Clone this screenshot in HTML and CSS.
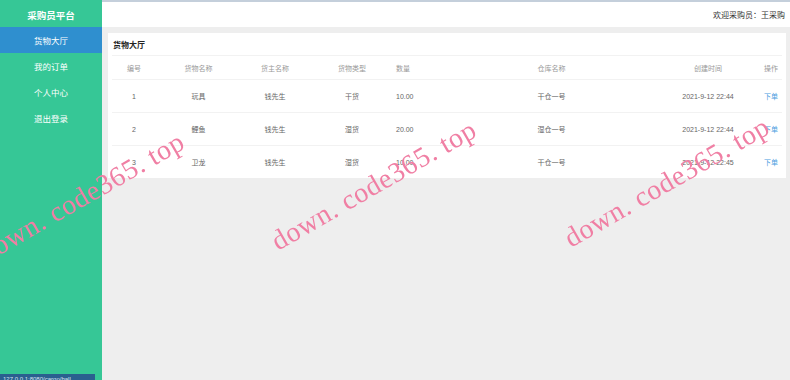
FILE: index.html
```html
<!DOCTYPE html>
<html lang="zh-CN">
<head>
    <meta charset="UTF-8">
    <meta name="viewport" content="width=device-width, initial-scale=1.0">
    <title>采购员平台</title>
    <link rel="stylesheet" href="styles.css">
</head>
<body>
    <div class="layout">
        <aside class="sidebar">
            <div class="brand">采购员平台</div>
            <ul class="menu">
                <li class="active">货物大厅</li>
                <li>我的订单</li>
                <li>个人中心</li>
                <li>退出登录</li>
            </ul>
        </aside>

        <main class="main">
            <header class="topbar">欢迎采购员：王采购</header>

            <section class="card">
                <div class="card-title">货物大厅</div>
                <table class="goods">
                    <colgroup>
                        <col style="width: 44px">
                        <col style="width: 85px">
                        <col style="width: 68px">
                        <col style="width: 86px">
                        <col style="width: 52px">
                        <col style="width: 209px">
                        <col style="width: 104px">
                        <col style="width: 22px">
                    </colgroup>
                    <thead>
                        <tr>
                            <th>编号</th>
                            <th>货物名称</th>
                            <th>货主名称</th>
                            <th>货物类型</th>
                            <th class="left">数量</th>
                            <th>仓库名称</th>
                            <th>创建时间</th>
                            <th>操作</th>
                        </tr>
                    </thead>
                    <tbody>
                        <tr>
                            <td>1</td>
                            <td>玩具</td>
                            <td>钱先生</td>
                            <td>干货</td>
                            <td class="left">10.00</td>
                            <td>干仓一号</td>
                            <td>2021-9-12 22:44</td>
                            <td><a class="action">下单</a></td>
                        </tr>
                        <tr>
                            <td>2</td>
                            <td>鲤鱼</td>
                            <td>钱先生</td>
                            <td>湿货</td>
                            <td class="left">20.00</td>
                            <td>湿仓一号</td>
                            <td>2021-9-12 22:44</td>
                            <td><a class="action">下单</a></td>
                        </tr>
                        <tr>
                            <td>3</td>
                            <td>卫龙</td>
                            <td>钱先生</td>
                            <td>湿货</td>
                            <td class="left">10.00</td>
                            <td>干仓一号</td>
                            <td>2021-9-12 22:45</td>
                            <td><a class="action">下单</a></td>
                        </tr>
                    </tbody>
                </table>
            </section>
        </main>
    </div>

    <!-- watermark overlay -->
    <div class="watermarks">
        <span class="mark mark-1">down. code365. top</span>
        <span class="mark mark-2">down. code365. top</span>
        <span class="mark mark-3">down. code365. top</span>
    </div>

    <div class="status">127.0.0.1:8080/cargo/hall</div>
</body>
</html>
```

FILE: styles.css
```css
:root {
    --green: #36c796;
    --blue: #2f8fcf;
    --page-bg: #eeeeee;
    --line: #f2f2f2;
    --text: #666666;
    --muted: #999999;
    --link: #4a9de0;
}

body {
    margin: 0;
    font-family: "Liberation Sans", "Noto Sans CJK SC", sans-serif;
    color: var(--text);
    overflow: hidden;
}

.layout {
    display: flex;
    height: 100vh;
}

/* Sidebar */
.sidebar {
    width: 102px;
    flex-shrink: 0;
    background-color: var(--green);
    color: #ffffff;
}

.brand {
    height: 24px;
    padding-top: 3px;
    display: flex;
    align-items: center;
    justify-content: center;
    font-size: 9.5px;
    font-weight: bold;
}

.menu {
    list-style: none;
    margin: 0;
    padding: 0;
}

.menu li {
    height: 26px;
    display: flex;
    align-items: center;
    justify-content: center;
    font-size: 8.5px;
}

.menu li.active {
    background-color: var(--blue);
}

/* Main area */
.main {
    flex: 1;
    background-color: var(--page-bg);
    border-top: 2px solid #c4cfdb;
}

.topbar {
    height: 25px;
    background-color: #ffffff;
    display: flex;
    align-items: center;
    justify-content: flex-end;
    padding-right: 5px;
    font-size: 8px;
    color: #333333;
}

.card {
    margin: 6px 4px 0 6px;
    background-color: #ffffff;
}

.card-title {
    height: 22px;
    padding-left: 5px;
    display: flex;
    align-items: center;
    font-size: 8px;
    font-weight: bold;
    color: #222222;
}

.goods {
    width: calc(100% - 8px);
    margin: 0 4px;
    border-collapse: collapse;
    table-layout: fixed;
    font-size: 7px;
}

.goods th,
.goods td {
    padding: 0;
    text-align: center;
    white-space: nowrap;
}

.goods th {
    height: 23px;
    font-weight: normal;
    color: var(--muted);
}

.goods td {
    height: 32px;
    color: var(--text);
}

.goods thead tr {
    border-top: 1px solid var(--line);
}

.goods tr {
    border-bottom: 1px solid var(--line);
}

.goods tbody tr:last-child {
    border-bottom: none;
}

.goods .left {
    text-align: left;
    padding-left: 1px;
}

.action {
    color: var(--link);
    cursor: pointer;
}

/* Watermarks */
.watermarks {
    position: fixed;
    inset: 0;
    pointer-events: none;
    overflow: hidden;
}

.mark {
    position: absolute;
    font-family: "Liberation Serif", serif;
    font-size: 28px;
    line-height: 28px;
    letter-spacing: 0.6px;
    color: #f07fa4;
    white-space: nowrap;
    transform: rotate(-30deg);
    transform-origin: 0 23px;
}

.mark-1 { left: -14px; top: 240px; }
.mark-2 { left: 278px; top: 228px; }
.mark-3 { left: 571px; top: 225px; }

/* Browser status bubble */
.status {
    position: fixed;
    left: 0;
    bottom: 0;
    width: 92px;
    height: 6px;
    padding-left: 3px;
    overflow: hidden;
    background-color: #2a5f8f;
    color: #dbe6f0;
    font-size: 6px;
    line-height: 10px;
}
```
